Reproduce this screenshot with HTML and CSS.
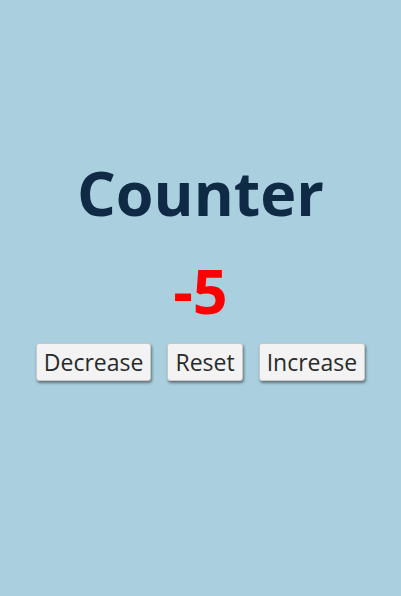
FILE: index.html
```html
<!DOCTYPE html>
<html>
<head>
<meta charset="utf-8">
<link rel="stylesheet" href="styles.css">
</head>
<body>
<main class="app">
  <h1 class="title">Counter</h1>
  <div class="value">-5</div>
  <div class="buttons">
    <button class="btn">Decrease</button>
    <button class="btn">Reset</button>
    <button class="btn">Increase</button>
  </div>
</main>
</body>
</html>
```

FILE: styles.css
```css
html, body {
  margin: 0;
  height: 100%;
}
body {
  background: #aad0df;
  font-family: "Open Sans", sans-serif;
}
.app {
  height: 100%;
  display: flex;
  flex-direction: column;
  align-items: center;
  justify-content: center;
  padding-bottom: 54px;
  box-sizing: border-box;
}
.title {
  margin: 0;
  font-size: 61px;
  font-weight: 700;
  color: #0f2a44;
  line-height: 1;
}
.value {
  margin-top: 37px;
  font-size: 61px;
  font-weight: 700;
  color: #ff0000;
  line-height: 1;
}
.buttons {
  margin-top: 22px;
  display: flex;
  gap: 16px;
}
.btn {
  font-family: inherit;
  font-size: 23px;
  color: #2a2a2a;
  background: #f3f3f3;
  border: 1px solid #c8c8c8;
  border-radius: 3px;
  padding: 2px 7px;
  box-shadow: 1px 2px 3px rgba(0,0,0,0.45);
}
```
